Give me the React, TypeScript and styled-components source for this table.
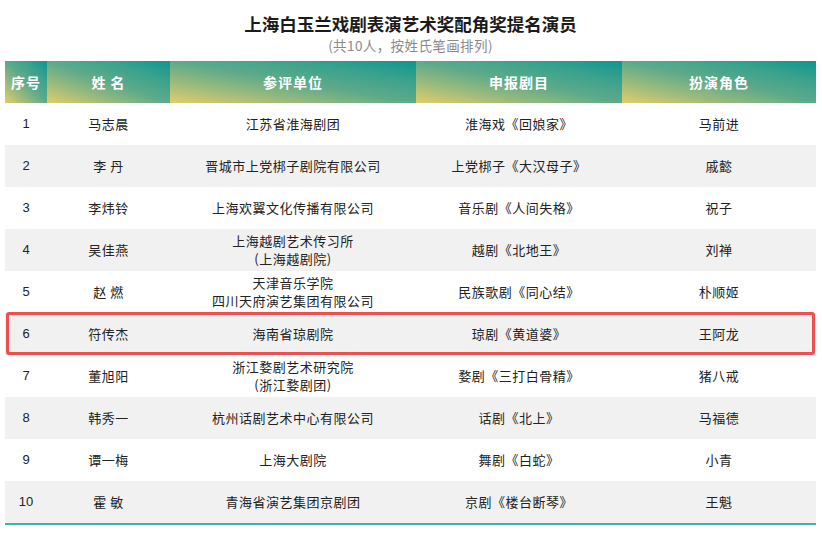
import React from "react";
import styled, { createGlobalStyle } from "styled-components";

const Global = createGlobalStyle`
  html, body { margin: 0; padding: 0; background: #fff; }
  body { font-family: "Liberation Sans", "Noto Sans CJK SC", sans-serif; }
`;

const Page = styled.div`
  width: 822px;
  height: 540px;
  padding: 11px 0 0 5px;
  box-sizing: border-box;
  overflow: hidden;
`;

const Wrap = styled.div`
  width: 811px;
  display: flex;
  flex-direction: column;
`;

const Title = styled.h1`
  margin: 0;
  font-family: "Noto Sans CJK SC", sans-serif;
  font-size: 17.5px;
  line-height: 25px;
  font-weight: 700;
  color: #1b1b1b;
  text-align: center;
`;

const Subtitle = styled.div`
  font-family: "Noto Sans CJK SC", sans-serif;
  font-size: 13.5px;
  line-height: 18px;
  color: #8a8a8a;
  text-align: center;
  letter-spacing: 0.4px;
  margin-bottom: 7px;
`;

const COLS = "42px 123px 246px 206px 194px";

const HeadRow = styled.div`
  display: grid;
  grid-template-columns: ${COLS};
  height: 42px;
`;

const HeadCell = styled.div`
  display: flex;
  align-items: center;
  justify-content: center;
  background: linear-gradient(to top right, #e2cd6b 0%, #9dbb7b 25%, #5eaa8a 50%, #3aa28d 75%, #0f968f 100%);
  color: #fff;
  font-family: "Noto Sans CJK SC", sans-serif;
  font-size: 14px;
  font-weight: 700;
  letter-spacing: 1px;
  white-space: pre;
`;

const Row = styled.div<{ $alt: boolean; $mark?: boolean }>`
  position: relative;
  display: grid;
  grid-template-columns: ${COLS};
  height: 42px;
  background: ${(p) => (p.$alt ? "#f1f1f1" : "#ffffff")};
  ${(p) =>
    p.$mark
      ? `&::after {
    content: "";
    position: absolute;
    left: 1px;
    right: 1px;
    top: -1px;
    bottom: 0px;
    border: 3px solid #f04f50;
    border-radius: 3px;
    pointer-events: none;
  }`
      : ""}
`;

const Cell = styled.div<{ $num?: boolean }>`
  display: flex;
  flex-direction: column;
  align-items: center;
  justify-content: center;
  text-align: center;
  color: #222;
  font-family: ${(p) =>
    p.$num ? `"Liberation Sans", sans-serif` : `"Noto Sans CJK SC", sans-serif`};
  font-size: 13px;
  line-height: 18px;
  letter-spacing: ${(p) => (p.$num ? "0" : "0.5px")};
  white-space: pre;
`;

const BottomLine = styled.div`
  height: 2px;
  background: #3fb1ae;
`;

type R = { n: string; name: string; unit: string; play: string; role: string };

const rows: R[] = [
  { n: "1", name: "马志晨", unit: "江苏省淮海剧团", play: "淮海戏《回娘家》", role: "马前进" },
  { n: "2", name: "李 丹", unit: "晋城市上党梆子剧院有限公司", play: "上党梆子《大汉母子》", role: "戚懿" },
  { n: "3", name: "李炜铃", unit: "上海欢翼文化传播有限公司", play: "音乐剧《人间失格》", role: "祝子" },
  { n: "4", name: "吴佳燕", unit: "上海越剧艺术传习所\n(上海越剧院)", play: "越剧《北地王》", role: "刘禅" },
  { n: "5", name: "赵 燃", unit: "天津音乐学院\n四川天府演艺集团有限公司", play: "民族歌剧《同心结》", role: "朴顺姬" },
  { n: "6", name: "符传杰", unit: "海南省琼剧院", play: "琼剧《黄道婆》", role: "王阿龙" },
  { n: "7", name: "董旭阳", unit: "浙江婺剧艺术研究院\n(浙江婺剧团)", play: "婺剧《三打白骨精》", role: "猪八戒" },
  { n: "8", name: "韩秀一", unit: "杭州话剧艺术中心有限公司", play: "话剧《北上》", role: "马福德" },
  { n: "9", name: "谭一梅", unit: "上海大剧院", play: "舞剧《白蛇》", role: "小青" },
  { n: "10", name: "霍 敏", unit: "青海省演艺集团京剧团", play: "京剧《楼台断琴》", role: "王魁" },
];

const heads = ["序号", "姓 名", "参评单位", "申报剧目", "扮演角色"];

export default function App() {
  return (
    <Page>
      <Global />
      <Wrap>
        <Title>上海白玉兰戏剧表演艺术奖配角奖提名演员</Title>
        <Subtitle>(共10人，按姓氏笔画排列)</Subtitle>
        <HeadRow>
          {heads.map((h) => (
            <HeadCell key={h}>{h}</HeadCell>
          ))}
        </HeadRow>
        {rows.map((r, i) => (
          <Row key={r.n} $alt={i % 2 === 1} $mark={r.n === "6"}>
            <Cell $num>{r.n}</Cell>
            <Cell>{r.name}</Cell>
            <Cell>{r.unit}</Cell>
            <Cell>{r.play}</Cell>
            <Cell>{r.role}</Cell>
          </Row>
        ))}
        <BottomLine />
      </Wrap>
    </Page>
  );
}
